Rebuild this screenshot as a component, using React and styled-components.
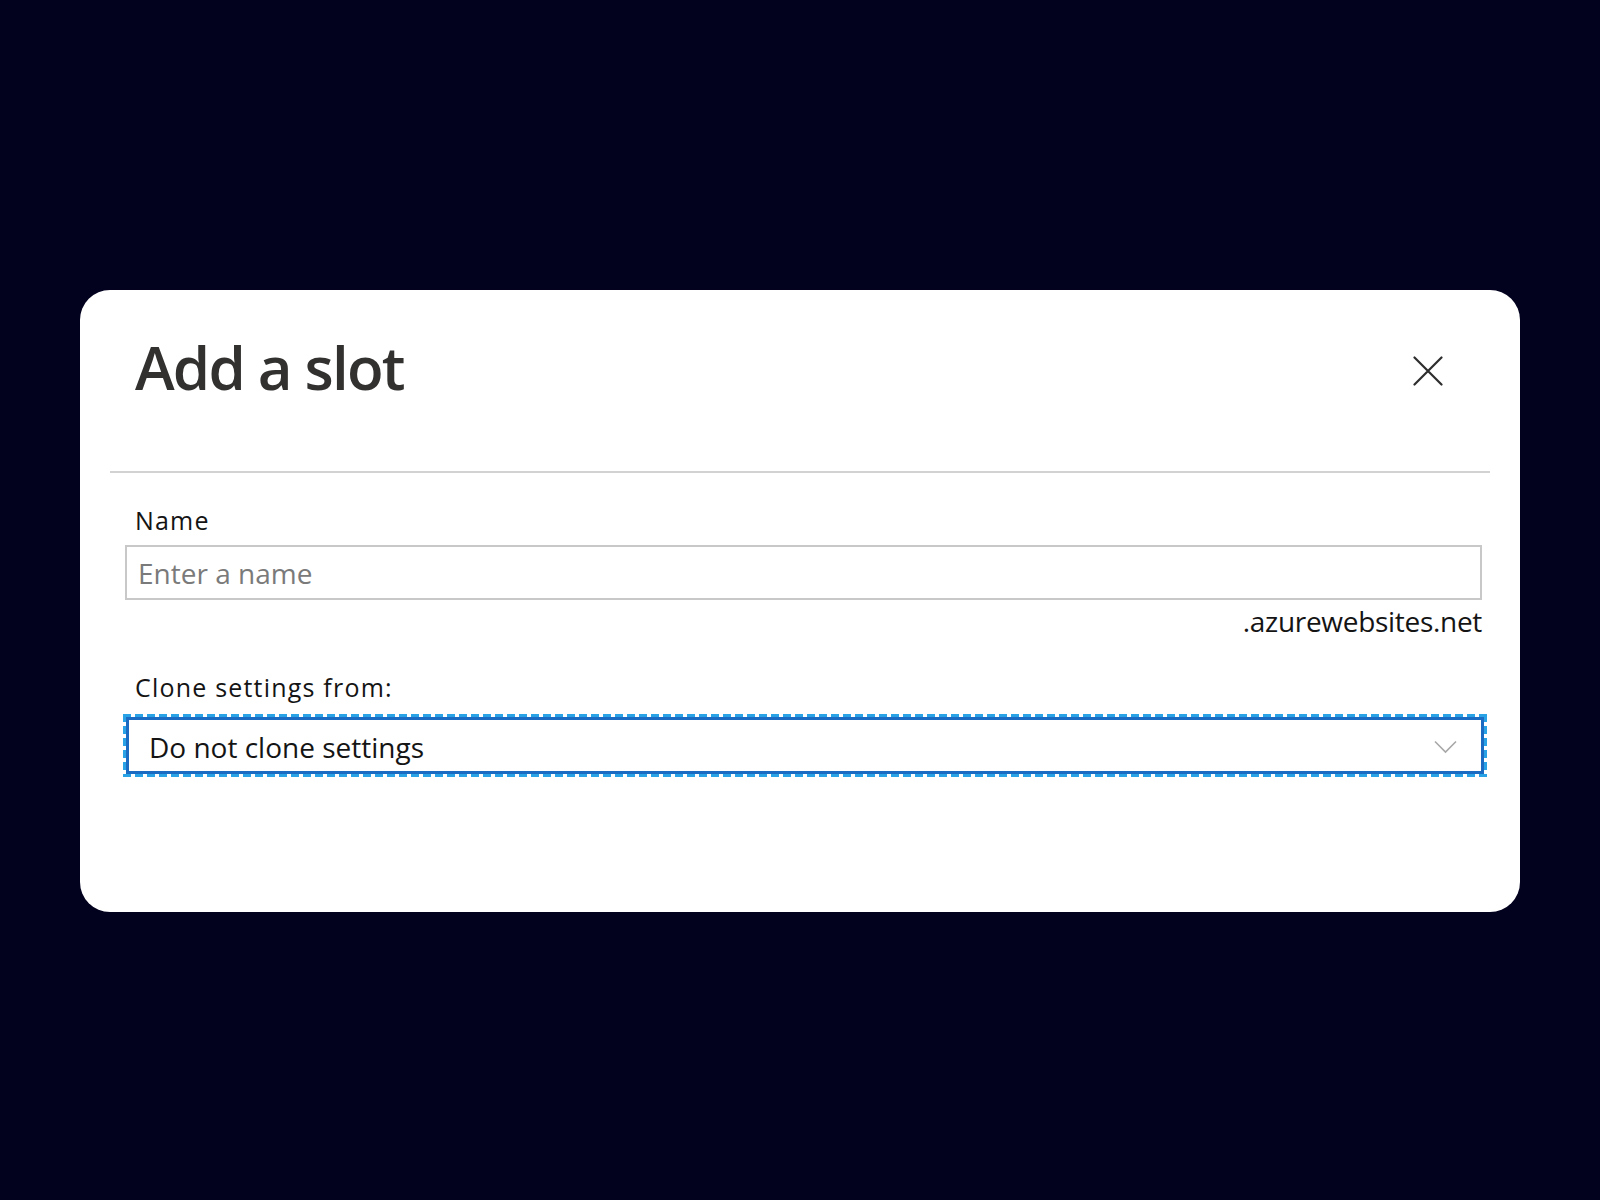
import styled, { createGlobalStyle } from 'styled-components'

const GlobalStyle = createGlobalStyle`
    html, body {
        margin: 0;
        padding: 0;
        background: #02021f;
    }
    * {
        box-sizing: border-box;
    }
`;

const Page = styled.div`
    min-height: 1200px;
    padding: 290px 80px 0 80px;
    background: #02021f;
    font-family: "Open Sans", "Noto Sans", sans-serif;
`;

const Card = styled.div`
    width: 1440px;
    height: 622px;
    padding: 0 30px;
    background: #ffffff;
    border-radius: 30px;
    display: flex;
    flex-direction: column;
`;

const Header = styled.div`
    display: flex;
    justify-content: space-between;
    align-items: flex-start;
    height: 183px;
    padding: 47px 47px 0 25px;
    border-bottom: 2px solid #d2d2d2;
`;

const Title = styled.h1`
    margin: 0;
    font-size: 60px;
    line-height: 60px;
    font-weight: 600;
    color: #323130;
    letter-spacing: -1.8px;
`;

const CloseButton = styled.button`
    margin-top: 19px;
    width: 30px;
    height: 30px;
    padding: 0;
    border: none;
    background: transparent;
    cursor: pointer;
    display: flex;
`;

const Form = styled.div`
    display: flex;
    flex-direction: column;
    padding: 30px 8px 0 15px;
`;

const Label = styled.label`
    margin-left: 10px;
    font-size: 25px;
    line-height: 34px;
    color: #141414;
    letter-spacing: 1.2px;
    margin-top: ${props => props.gap ? props.gap : "0px"};
`;

const Input = styled.input`
    margin-top: 8px;
    height: 55px;
    width: 100%;
    padding: 0 10px 0 11px;
    border: 2px solid #c8c8c8;
    font-family: inherit;
    font-size: 28px;
    color: #222;
    outline: none;
    &::placeholder {
        color: #7a7a7a;
    }
`;

const Suffix = styled.div`
    align-self: flex-end;
    margin-top: 3px;
    font-size: 28px;
    line-height: 37px;
    color: #141414;
    letter-spacing: -0.3px;
`;

// focus ring: long dashes like the reference, drawn with gradients
const dashH = 'repeating-linear-gradient(90deg, #29a2e6 0 8px, transparent 8px 12px)';
const dashV = 'repeating-linear-gradient(180deg, #29a2e6 0 8px, transparent 8px 12px)';

const SelectFrame = styled.div`
    margin-top: 10px;
    margin-left: -2px;
    margin-right: -5px;
    padding: 3px;
    background:
        ${dashH} top left / 100% 3px no-repeat,
        ${dashH} bottom left / 100% 3px no-repeat,
        ${dashV} top left / 3px 100% no-repeat,
        ${dashV} top right / 3px 100% no-repeat;
`;

const Select = styled.div`
    height: 57px;
    display: flex;
    align-items: center;
    justify-content: space-between;
    padding: 3px 24px 0 20px;
    border: 3px solid #1c6bc2;
    background: #ffffff;
    font-size: 28px;
    color: #141414;
    cursor: pointer;
`;

const Close = () => (
    <svg width="30" height="30" viewBox="0 0 30 30">
        <path d="M1.5 1.5 L28.5 28.5 M28.5 1.5 L1.5 28.5" stroke="#2d2d2d" strokeWidth="2.2" strokeLinecap="round" fill="none" />
    </svg>
);

const Chevron = () => (
    <svg width="23" height="14" viewBox="0 0 23 14">
        <path d="M1 1.5 L11.5 12 L22 1.5" stroke="#a8a8a8" strokeWidth="1.6" fill="none" />
    </svg>
);

const App = () => {
    return (
        <Page>
            <GlobalStyle />
            <Card>
                <Header>
                    <Title>Add a slot</Title>
                    <CloseButton aria-label="Close"><Close /></CloseButton>
                </Header>
                <Form>
                    <Label>Name</Label>
                    <Input placeholder="Enter a name" />
                    <Suffix>.azurewebsites.net</Suffix>
                    <Label gap="30px">Clone settings from:</Label>
                    <SelectFrame>
                        <Select>
                            <span>Do not clone settings</span>
                            <Chevron />
                        </Select>
                    </SelectFrame>
                </Form>
            </Card>
        </Page>
    );
}

export default App;
